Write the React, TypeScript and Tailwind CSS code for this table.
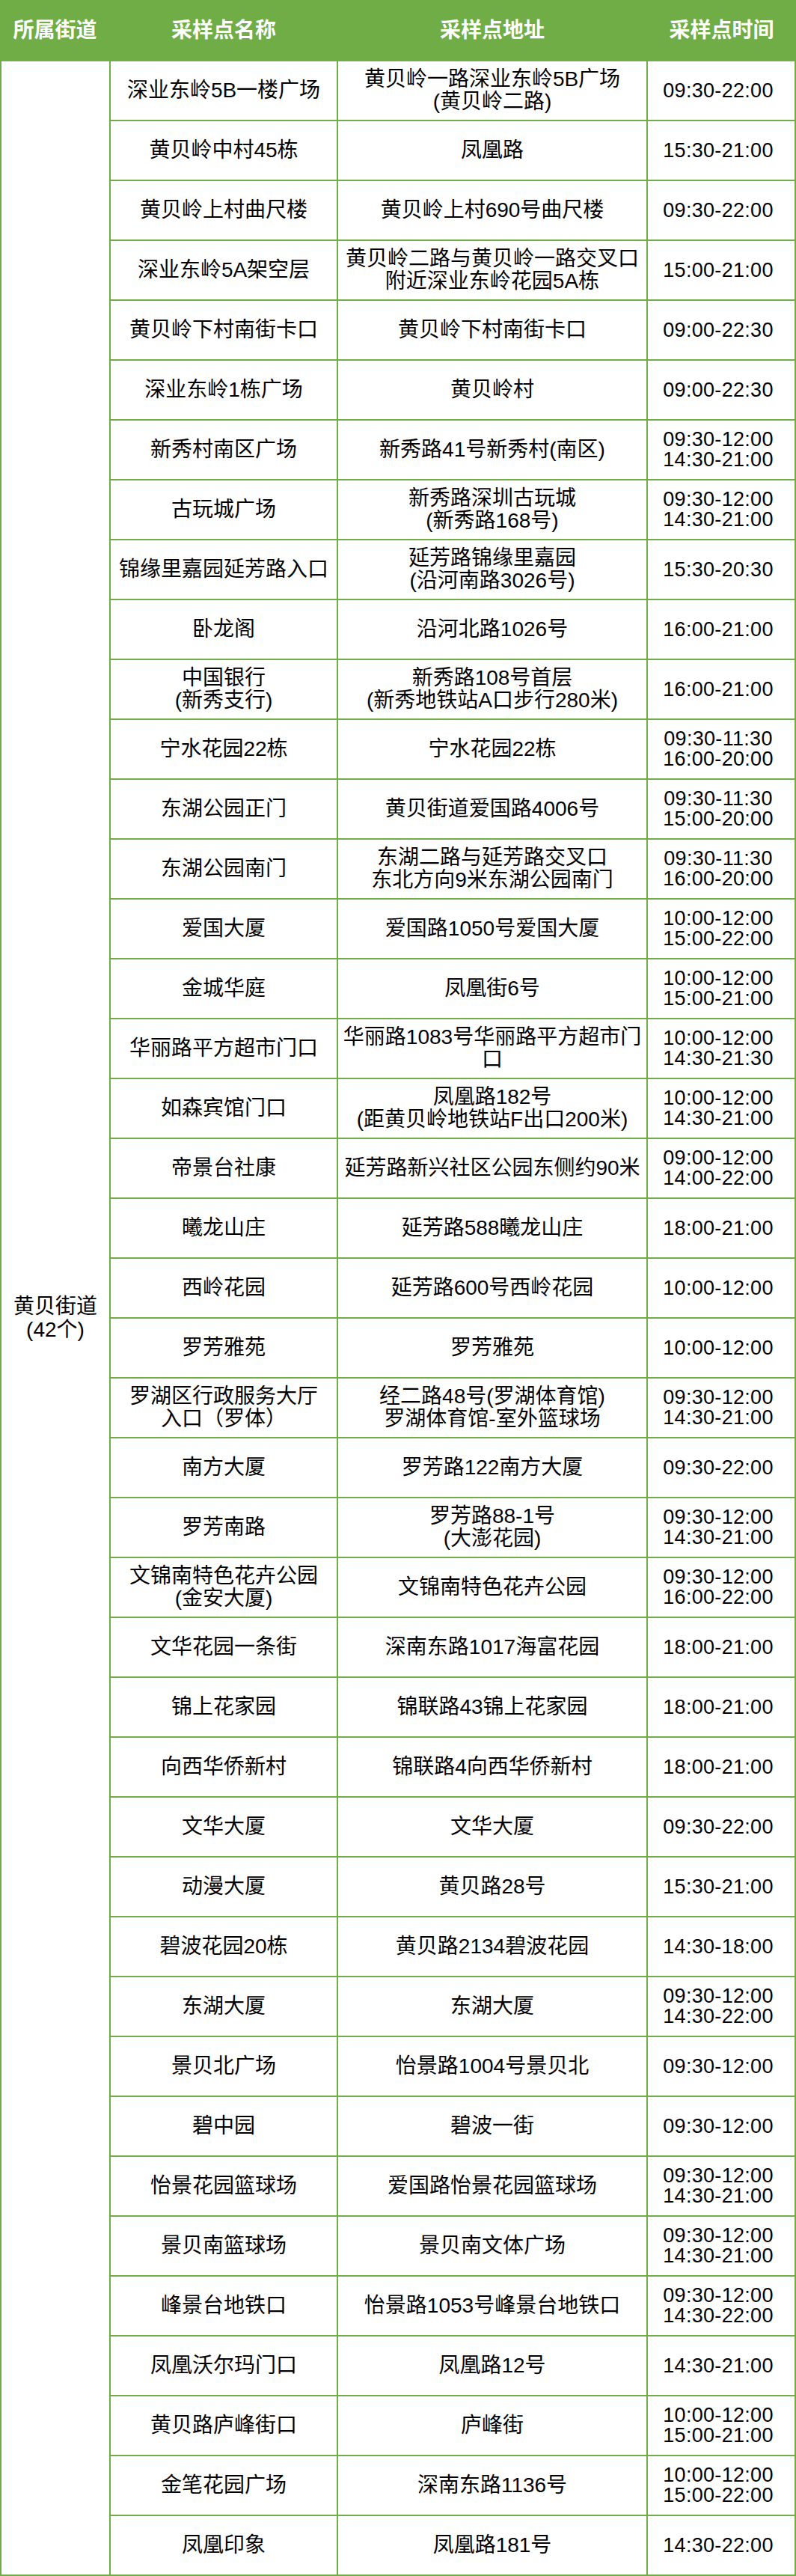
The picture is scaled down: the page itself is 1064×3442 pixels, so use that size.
/**
 * App.tsx
 * -------
 * 黄贝街道核酸采样点一览表 (42个).
 * Green-ruled table: one merged district cell on the left, then
 * name / address / opening hours per sampling point.
 */

type Site = [name: string, address: string, time: string];

const SITES: Site[] = [
    ['深业东岭5B一楼广场', '黄贝岭一路深业东岭5B广场\n(黄贝岭二路)', '09:30-22:00'],
    ['黄贝岭中村45栋', '凤凰路', '15:30-21:00'],
    ['黄贝岭上村曲尺楼', '黄贝岭上村690号曲尺楼', '09:30-22:00'],
    ['深业东岭5A架空层', '黄贝岭二路与黄贝岭一路交叉口\n附近深业东岭花园5A栋', '15:00-21:00'],
    ['黄贝岭下村南街卡口', '黄贝岭下村南街卡口', '09:00-22:30'],
    ['深业东岭1栋广场', '黄贝岭村', '09:00-22:30'],
    ['新秀村南区广场', '新秀路41号新秀村(南区)', '09:30-12:00\n14:30-21:00'],
    ['古玩城广场', '新秀路深圳古玩城\n(新秀路168号)', '09:30-12:00\n14:30-21:00'],
    ['锦缘里嘉园延芳路入口', '延芳路锦缘里嘉园\n(沿河南路3026号)', '15:30-20:30'],
    ['卧龙阁', '沿河北路1026号', '16:00-21:00'],
    ['中国银行\n(新秀支行)', '新秀路108号首层\n(新秀地铁站A口步行280米)', '16:00-21:00'],
    ['宁水花园22栋', '宁水花园22栋', '09:30-11:30\n16:00-20:00'],
    ['东湖公园正门', '黄贝街道爱国路4006号', '09:30-11:30\n15:00-20:00'],
    ['东湖公园南门', '东湖二路与延芳路交叉口\n东北方向9米东湖公园南门', '09:30-11:30\n16:00-20:00'],
    ['爱国大厦', '爱国路1050号爱国大厦', '10:00-12:00\n15:00-22:00'],
    ['金城华庭', '凤凰街6号', '10:00-12:00\n15:00-21:00'],
    ['华丽路平方超市门口', '华丽路1083号华丽路平方超市门\n口', '10:00-12:00\n14:30-21:30'],
    ['如森宾馆门口', '凤凰路182号\n(距黄贝岭地铁站F出口200米)', '10:00-12:00\n14:30-21:00'],
    ['帝景台社康', '延芳路新兴社区公园东侧约90米', '09:00-12:00\n14:00-22:00'],
    ['曦龙山庄', '延芳路588曦龙山庄', '18:00-21:00'],
    ['西岭花园', '延芳路600号西岭花园', '10:00-12:00'],
    ['罗芳雅苑', '罗芳雅苑', '10:00-12:00'],
    ['罗湖区行政服务大厅\n入口（罗体）', '经二路48号(罗湖体育馆)\n罗湖体育馆-室外篮球场', '09:30-12:00\n14:30-21:00'],
    ['南方大厦', '罗芳路122南方大厦', '09:30-22:00'],
    ['罗芳南路', '罗芳路88-1号\n(大澎花园)', '09:30-12:00\n14:30-21:00'],
    ['文锦南特色花卉公园\n(金安大厦)', '文锦南特色花卉公园', '09:30-12:00\n16:00-22:00'],
    ['文华花园一条街', '深南东路1017海富花园', '18:00-21:00'],
    ['锦上花家园', '锦联路43锦上花家园', '18:00-21:00'],
    ['向西华侨新村', '锦联路4向西华侨新村', '18:00-21:00'],
    ['文华大厦', '文华大厦', '09:30-22:00'],
    ['动漫大厦', '黄贝路28号', '15:30-21:00'],
    ['碧波花园20栋', '黄贝路2134碧波花园', '14:30-18:00'],
    ['东湖大厦', '东湖大厦', '09:30-12:00\n14:30-22:00'],
    ['景贝北广场', '怡景路1004号景贝北', '09:30-12:00'],
    ['碧中园', '碧波一街', '09:30-12:00'],
    ['怡景花园篮球场', '爱国路怡景花园篮球场', '09:30-12:00\n14:30-21:00'],
    ['景贝南篮球场', '景贝南文体广场', '09:30-12:00\n14:30-21:00'],
    ['峰景台地铁口', '怡景路1053号峰景台地铁口', '09:30-12:00\n14:30-22:00'],
    ['凤凰沃尔玛门口', '凤凰路12号', '14:30-21:00'],
    ['黄贝路庐峰街口', '庐峰街', '10:00-12:00\n15:00-21:00'],
    ['金笔花园广场', '深南东路1136号', '10:00-12:00\n15:00-22:00'],
    ['凤凰印象', '凤凰路181号', '14:30-22:00'],
];

const cell = 'bg-white flex items-center justify-center text-center whitespace-pre text-black';

function HeaderRow() {
    return (
        <div className="grid grid-cols-[147px_304px_414px_199px] h-[82px] items-center text-white font-bold text-[28px] leading-[30px]">
            <div className="text-center">所属街道</div>
            <div className="text-center">采样点名称</div>
            <div className="text-center">采样点地址</div>
            <div className="text-center">采样点时间</div>
        </div>
    );
}

export default function App() {
    return (
        <div className="w-[1064px] bg-[#70ad47] font-['Liberation_Sans','Noto_Sans_CJK_SC',sans-serif]">
            <HeaderRow />
            <div className="grid grid-cols-[144px_302px_412px_196px] auto-rows-[78px] gap-[2px] px-[2px] pb-[2px]">
                {/* merged district cell spanning every row */}
                <div className={`${cell} [grid-column:1] [grid-row:1/span_42] text-[28px] leading-[31px]`}>
                    {'黄贝街道\n(42个)'}
                </div>
                {SITES.map(([name, address, time], i) => (
                    <div key={i} className="contents">
                        <div className={`${cell} text-[28px] leading-[30px]`}>{name}</div>
                        <div className={`${cell} text-[28px] leading-[30px]`}>{address}</div>
                        <div className={`${cell} text-[27px] leading-[27px] tracking-[0.3px] pr-[8px]`}>{time}</div>
                    </div>
                ))}
            </div>
        </div>
    );
}
